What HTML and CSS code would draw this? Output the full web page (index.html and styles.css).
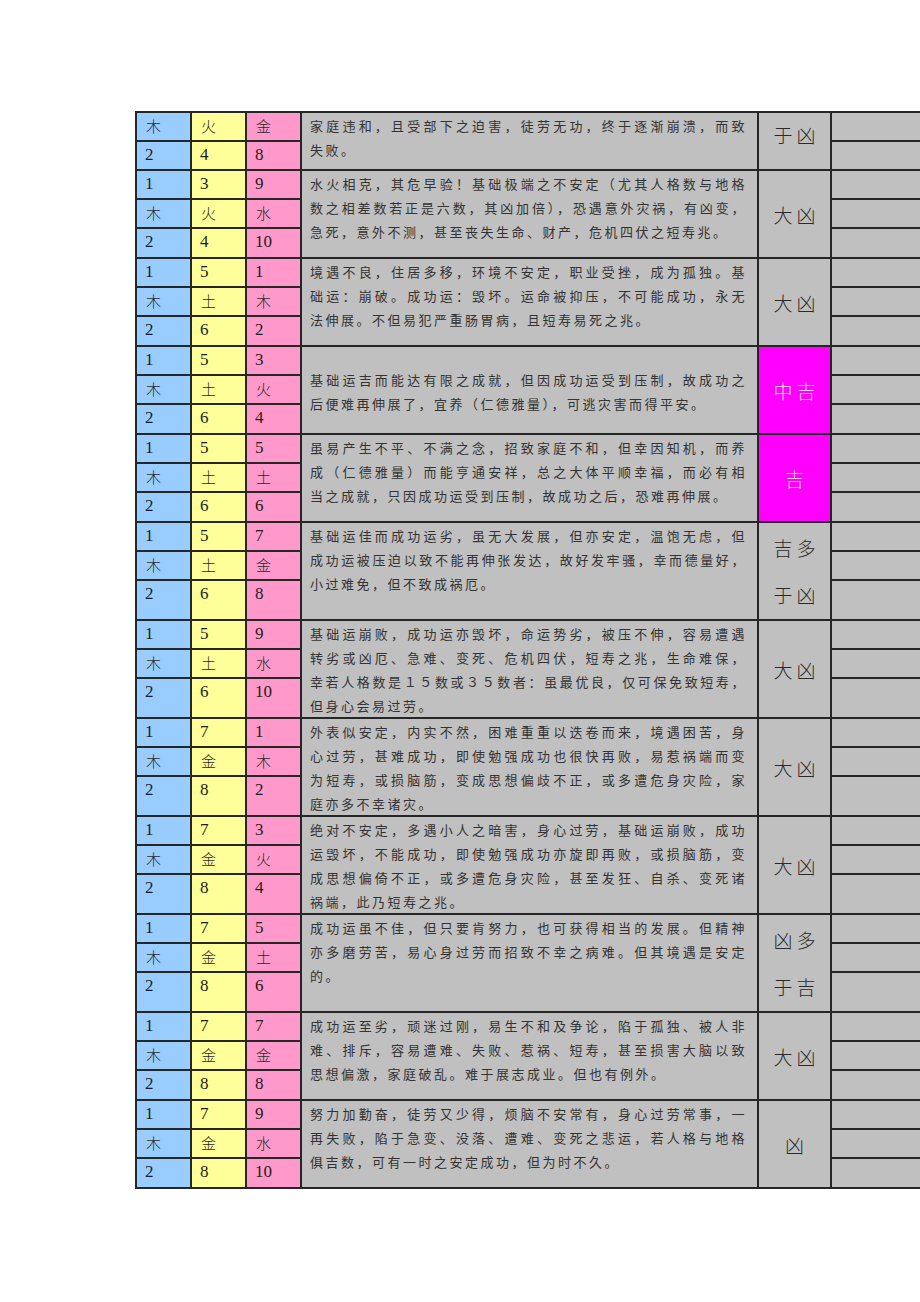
FILE: index.html
```html
<!DOCTYPE html>
<html lang="zh-CN">
<head>
<meta charset="utf-8">
<title>数理吉凶表</title>
<link rel="stylesheet" href="styles.css">
</head>
<body>
<div class="sheet">

  <div class="group part">
    <div class="c b"><span class="h">木</span></div>
    <div class="c y"><span class="h">火</span></div>
    <div class="c p"><span class="h">金</span></div>
    <div class="desc"><span class="ln">家庭违和，且受部下之迫害，徒劳无功，终于逐渐崩溃，而致</span><span class="ln end">失败。</span></div>
    <div class="res up">于凶</div>
    <div class="e"></div>
    <div class="c b">2</div><div class="c y">4</div><div class="c p">8</div><div class="e"></div>
  </div>

  <div class="group">
    <div class="c b">1</div><div class="c y">3</div><div class="c p">9</div>
    <div class="desc"><span class="ln">水火相克，其危早验！基础极端之不安定（尤其人格数与地格</span><span class="ln">数之相差数若正是六数，其凶加倍），恐遇意外灾祸，有凶变，</span><span class="ln end">急死，意外不测，甚至丧失生命、财产，危机四伏之短寿兆。</span></div>
    <div class="res">大凶</div>
    <div class="e"></div>
    <div class="c b"><span class="h">木</span></div><div class="c y"><span class="h">火</span></div><div class="c p"><span class="h">水</span></div><div class="e"></div>
    <div class="c b">2</div><div class="c y">4</div><div class="c p">10</div><div class="e"></div>
  </div>

  <div class="group">
    <div class="c b">1</div><div class="c y">5</div><div class="c p">1</div>
    <div class="desc"><span class="ln">境遇不良，住居多移，环境不安定，职业受挫，成为孤独。基</span><span class="ln">础运：崩破。成功运：毁坏。运命被抑压，不可能成功，永无</span><span class="ln end">法伸展。不但易犯严重肠胃病，且短寿易死之兆。</span></div>
    <div class="res">大凶</div>
    <div class="e"></div>
    <div class="c b"><span class="h">木</span></div><div class="c y"><span class="h">土</span></div><div class="c p"><span class="h">木</span></div><div class="e"></div>
    <div class="c b">2</div><div class="c y">6</div><div class="c p">2</div><div class="e"></div>
  </div>

  <div class="group">
    <div class="c b">1</div><div class="c y">5</div><div class="c p">3</div>
    <div class="desc mid"><span class="ln">基础运吉而能达有限之成就，但因成功运受到压制，故成功之</span><span class="ln end">后便难再伸展了，宜养（仁德雅量），可逃灾害而得平安。</span></div>
    <div class="res good">中吉</div>
    <div class="e"></div>
    <div class="c b"><span class="h">木</span></div><div class="c y"><span class="h">土</span></div><div class="c p"><span class="h">火</span></div><div class="e"></div>
    <div class="c b">2</div><div class="c y">6</div><div class="c p">4</div><div class="e"></div>
  </div>

  <div class="group">
    <div class="c b">1</div><div class="c y">5</div><div class="c p">5</div>
    <div class="desc"><span class="ln">虽易产生不平、不满之念，招致家庭不和，但幸因知机，而养</span><span class="ln">成（仁德雅量）而能亨通安祥，总之大体平顺幸福，而必有相</span><span class="ln end">当之成就，只因成功运受到压制，故成功之后，恐难再伸展。</span></div>
    <div class="res good">吉</div>
    <div class="e"></div>
    <div class="c b"><span class="h">木</span></div><div class="c y"><span class="h">土</span></div><div class="c p"><span class="h">土</span></div><div class="e"></div>
    <div class="c b">2</div><div class="c y">6</div><div class="c p">6</div><div class="e"></div>
  </div>

  <div class="group tall">
    <div class="c b">1</div><div class="c y">5</div><div class="c p">7</div>
    <div class="desc"><span class="ln">基础运佳而成功运劣，虽无大发展，但亦安定，温饱无虑，但</span><span class="ln">成功运被压迫以致不能再伸张发达，故好发牢骚，幸而德量好，</span><span class="ln end">小过难免，但不致成祸厄。</span></div>
    <div class="res two">吉多<br>于凶</div>
    <div class="e"></div>
    <div class="c b"><span class="h">木</span></div><div class="c y"><span class="h">土</span></div><div class="c p"><span class="h">金</span></div><div class="e"></div>
    <div class="c b">2</div><div class="c y">6</div><div class="c p">8</div><div class="e"></div>
  </div>

  <div class="group tall">
    <div class="c b">1</div><div class="c y">5</div><div class="c p">9</div>
    <div class="desc"><span class="ln">基础运崩败，成功运亦毁坏，命运势劣，被压不伸，容易遭遇</span><span class="ln">转劣或凶厄、急难、变死、危机四伏，短寿之兆，生命难保，</span><span class="ln">幸若人格数是１５数或３５数者：虽最优良，仅可保免致短寿，</span><span class="ln end">但身心会易过劳。</span></div>
    <div class="res">大凶</div>
    <div class="e"></div>
    <div class="c b"><span class="h">木</span></div><div class="c y"><span class="h">土</span></div><div class="c p"><span class="h">水</span></div><div class="e"></div>
    <div class="c b">2</div><div class="c y">6</div><div class="c p">10</div><div class="e"></div>
  </div>

  <div class="group tall">
    <div class="c b">1</div><div class="c y">7</div><div class="c p">1</div>
    <div class="desc"><span class="ln">外表似安定，内实不然，困难重重以迭卷而来，境遇困苦，身</span><span class="ln">心过劳，甚难成功，即使勉强成功也很快再败，易惹祸端而变</span><span class="ln">为短寿，或损脑筋，变成思想偏歧不正，或多遭危身灾险，家</span><span class="ln end">庭亦多不幸诸灾。</span></div>
    <div class="res">大凶</div>
    <div class="e"></div>
    <div class="c b"><span class="h">木</span></div><div class="c y"><span class="h">金</span></div><div class="c p"><span class="h">木</span></div><div class="e"></div>
    <div class="c b">2</div><div class="c y">8</div><div class="c p">2</div><div class="e"></div>
  </div>

  <div class="group tall">
    <div class="c b">1</div><div class="c y">7</div><div class="c p">3</div>
    <div class="desc"><span class="ln">绝对不安定，多遇小人之暗害，身心过劳，基础运崩败，成功</span><span class="ln">运毁坏，不能成功，即使勉强成功亦旋即再败，或损脑筋，变</span><span class="ln">成思想偏倚不正，或多遭危身灾险，甚至发狂、自杀、变死诸</span><span class="ln end">祸端，此乃短寿之兆。</span></div>
    <div class="res">大凶</div>
    <div class="e"></div>
    <div class="c b"><span class="h">木</span></div><div class="c y"><span class="h">金</span></div><div class="c p"><span class="h">火</span></div><div class="e"></div>
    <div class="c b">2</div><div class="c y">8</div><div class="c p">4</div><div class="e"></div>
  </div>

  <div class="group tall">
    <div class="c b">1</div><div class="c y">7</div><div class="c p">5</div>
    <div class="desc"><span class="ln">成功运虽不佳，但只要肯努力，也可获得相当的发展。但精神</span><span class="ln">亦多磨劳苦，易心身过劳而招致不幸之病难。但其境遇是安定</span><span class="ln end">的。</span></div>
    <div class="res two">凶多<br>于吉</div>
    <div class="e"></div>
    <div class="c b"><span class="h">木</span></div><div class="c y"><span class="h">金</span></div><div class="c p"><span class="h">土</span></div><div class="e"></div>
    <div class="c b">2</div><div class="c y">8</div><div class="c p">6</div><div class="e"></div>
  </div>

  <div class="group">
    <div class="c b">1</div><div class="c y">7</div><div class="c p">7</div>
    <div class="desc"><span class="ln">成功运至劣，顽迷过刚，易生不和及争论，陷于孤独、被人非</span><span class="ln">难、排斥，容易遭难、失败、惹祸、短寿，甚至损害大脑以致</span><span class="ln end">思想偏激，家庭破乱。难于展志成业。但也有例外。</span></div>
    <div class="res">大凶</div>
    <div class="e"></div>
    <div class="c b"><span class="h">木</span></div><div class="c y"><span class="h">金</span></div><div class="c p"><span class="h">金</span></div><div class="e"></div>
    <div class="c b">2</div><div class="c y">8</div><div class="c p">8</div><div class="e"></div>
  </div>

  <div class="group">
    <div class="c b">1</div><div class="c y">7</div><div class="c p">9</div>
    <div class="desc"><span class="ln">努力加勤奋，徒劳又少得，烦脑不安常有，身心过劳常事，一</span><span class="ln">再失败，陷于急变、没落、遭难、变死之悲运，若人格与地格</span><span class="ln end">俱吉数，可有一时之安定成功，但为时不久。</span></div>
    <div class="res">凶</div>
    <div class="e"></div>
    <div class="c b"><span class="h">木</span></div><div class="c y"><span class="h">金</span></div><div class="c p"><span class="h">水</span></div><div class="e"></div>
    <div class="c b">2</div><div class="c y">8</div><div class="c p">10</div><div class="e"></div>
  </div>

</div>
</body>
</html>
```

FILE: styles.css
```css
html, body {
  margin: 0;
  padding: 0;
  background: #ffffff;
  overflow-x: hidden;
}

body {
  font-family: "Liberation Serif", "Noto Sans CJK SC", serif;
  color: #222222;
}

.sheet {
  margin: 111px 0 0 135px;
  width: 785px;
  box-sizing: border-box;
  background: #262626;
  padding: 2px 0 2px 2px;
  display: flex;
  flex-direction: column;
  gap: 2px;
}

.group {
  display: grid;
  grid-template-columns: 53px 53px 53px 455px 71px 1fr;
  grid-template-rows: 27px 27px 28px;
  gap: 2px;
}

.group.part {
  grid-template-rows: 27px 27px;
}

.group.tall {
  grid-template-rows: 27px 27px 38px;
}

.c {
  padding-left: 8px;
  font-size: 17px;
  line-height: 26px;
  color: #1e1e1e;
}

.c .h {
  font-family: "Noto Sans CJK SC", sans-serif;
  font-size: 15px;
  font-weight: 300;
  margin-left: 1px;
  color: #2a2a2a;
}

.b { background: #99ccff; }
.y { background: #ffff99; }
.p { background: #ff99cc; }
.e { background: #c0c0c0; }

.desc {
  grid-row: span 3;
  background: #c0c0c0;
  padding: 1px 10px 0 8px;
  font-family: "Noto Sans CJK SC", sans-serif;
  font-size: 13px;
  line-height: 24px;
  letter-spacing: 2.5px;
  color: #333333;
}

.group.part .desc,
.group.part .res {
  grid-row: span 2;
}

.desc.mid {
  display: flex;
  flex-direction: column;
  justify-content: center;
  padding-top: 4px;
}

.ln {
  display: block;
  text-align: justify;
  text-align-last: justify;
  white-space: nowrap;
}

.ln.end {
  text-align-last: left;
}

.res {
  grid-row: span 3;
  background: #c0c0c0;
  display: flex;
  align-items: center;
  justify-content: center;
  text-align: center;
  font-family: "Noto Sans CJK SC", sans-serif;
  font-size: 19px;
  font-weight: 300;
  letter-spacing: 4px;
  padding-left: 4px;
  color: #2a2a2a;
}

.res.up {
  padding-bottom: 14px;
}

.res.two {
  line-height: 47px;
}

.res.good {
  background: #ff00ff;
  color: #ffd2ff;
}
```
